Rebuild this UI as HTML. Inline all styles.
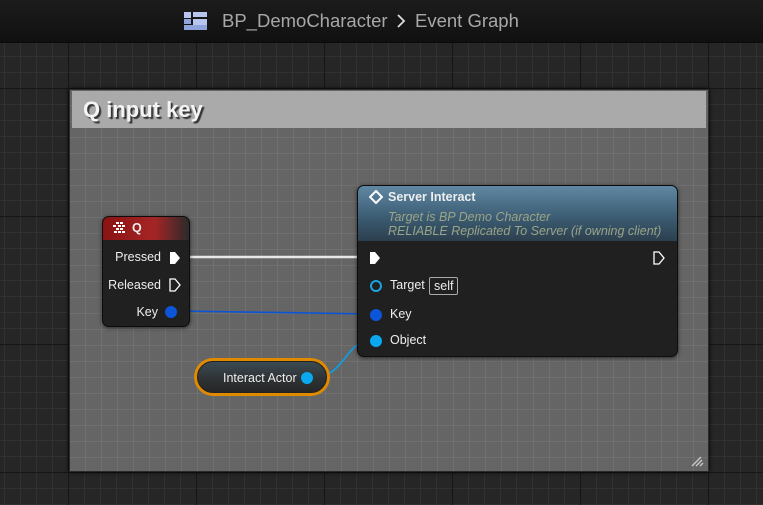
<!DOCTYPE html>
<html><head><style>
*{margin:0;padding:0;box-sizing:border-box}
body{width:763px;height:505px;overflow:hidden;position:relative;font-family:"Liberation Sans",sans-serif;
background-color:#262626;
background-image:
linear-gradient(to right,#161616 0 1px,transparent 1px),
linear-gradient(to bottom,#161616 0 1px,transparent 1px),
linear-gradient(to right,#313131 0 1px,transparent 1px),
linear-gradient(to bottom,#313131 0 1px,transparent 1px);
background-size:128px 128px,128px 128px,16px 16px,16px 16px;
background-position:68px 0,0 88px,4px 0,0 8px;}
.hdr{position:absolute;left:0;top:0;width:763px;height:43px;background:linear-gradient(#1c1c1c,#101010);border-bottom:1px solid #0a0a0a}
.hdr .t{position:absolute;top:10px;font-size:18.5px;color:#a8a8a8}
.cm{position:absolute;left:69px;top:89px;width:640px;height:383px;background-color:#656565;
background-image:linear-gradient(to right,#707070 0 1px,transparent 1px),linear-gradient(to bottom,#707070 0 1px,transparent 1px);
background-size:16px 16px;background-position:-1px 0,0 -1px;border:1px solid #2a2a2a;box-shadow:0 0 4px #000}
.cm .tb{position:absolute;left:2px;top:1px;right:2px;height:37px;background:#aaa}
.cm .tb span{position:absolute;left:11px;top:6px;font-size:22px;font-weight:bold;color:#f4f4f4;text-shadow:2px 2px 1px #333}
.node{position:absolute;background:#1f201f;border:1px solid #0c0c0c;border-radius:7px;box-shadow:0 1px 4px rgba(0,0,0,.6);overflow:hidden}
.lbl{position:absolute;font-size:12.5px;color:#eee;white-space:nowrap}
.pin{position:absolute;width:12px;height:12px;border-radius:50%}
</style></head><body>
<div class="hdr">
<svg style="position:absolute;left:184px;top:12px" width="24" height="18"><rect x="0" y="0" width="7" height="6" fill="#b8c6ef"/><rect x="0" y="7" width="7" height="5" fill="#8fa3dc"/><rect x="9" y="0" width="14" height="5" fill="#b8c6ef"/><rect x="9" y="7" width="14" height="6" fill="#b8c6ef"/><rect x="0" y="13" width="23" height="5" fill="#8fa3dc"/></svg>
<span class="t" style="left:222px">BP_DemoCharacter</span>
<svg style="position:absolute;left:395px;top:13px" width="12" height="16"><path d="M3 2l6 6-6 6" stroke="#ddd" stroke-width="1.8" fill="none"/></svg>
<span class="t" style="left:415px">Event Graph</span>
</div>
<div class="cm"><div class="tb"><span>Q input key</span></div>
<svg style="position:absolute;right:4px;bottom:4px" width="14" height="12"><path d="M2 11L11 2M6 11L12 5M10 11L13 8" stroke="#ccc" stroke-width="1.3"/></svg>
</div>
<svg style="position:absolute;left:0;top:0" width="763" height="505">
<path d="M185 257H368" stroke="#e8e8e8" stroke-width="2.5"/>
<path d="M180 311C260 312 300 313 370 314" stroke="#0a55d5" stroke-width="1.6" fill="none"/>
<path d="M314 377C345 377 345 341 370 341" stroke="#0aa0e8" stroke-width="1.6" fill="none"/>
</svg>
<div class="node" style="left:102px;top:216px;width:88px;height:111px">
<div style="height:23px;background:linear-gradient(to right,#8a1212 0,#a52525 60%,#2a2a2a 100%)"></div>
<svg style="position:absolute;left:10px;top:5px" width="14" height="13"><g fill="#fff"><rect x="3" y="0" width="3" height="2"/><rect x="7" y="0" width="3" height="2"/><rect x="0" y="3" width="3" height="2"/><rect x="5" y="3" width="3" height="2"/><rect x="9" y="3" width="3" height="2"/><rect x="3" y="6" width="3" height="2"/><rect x="7" y="6" width="3" height="2"/><rect x="1" y="9" width="3" height="2"/><rect x="5" y="9" width="3" height="2"/><rect x="9" y="9" width="3" height="2"/></g></svg>
<span class="lbl" style="left:29px;top:4px;font-weight:bold">Q</span>
<span class="lbl" style="right:28px;top:33px">Pressed</span>
<svg style="position:absolute;left:66px;top:34px" width="12" height="14"><path d="M1 1H6L11 7L6 13H1Z" fill="#fff"/></svg>
<span class="lbl" style="right:28px;top:61px">Released</span>
<svg style="position:absolute;left:66px;top:61px" width="12" height="14"><path d="M1 1H6L11 7L6 13H1Z" fill="none" stroke="#fff" stroke-width="1.3"/></svg>
<span class="lbl" style="right:31px;top:88px">Key</span>
<div class="pin" style="left:62px;top:89px;background:#0b56d8"></div>
</div>
<div class="node" style="left:357px;top:185px;width:321px;height:172px">
<div style="height:55px;background:linear-gradient(to bottom,#6088a4,#3a5a70 60%,#2c3f4e);"></div>
<svg style="position:absolute;left:11px;top:4px" width="14" height="14"><path d="M7 1L13 7L7 13L1 7Z" fill="none" stroke="#fff" stroke-width="2"/></svg>
<span class="lbl" style="left:30px;top:4px;font-weight:bold">Server Interact</span>
<span class="lbl" style="left:30px;top:24px;font-style:italic;color:#9ba487">Target is BP Demo Character</span>
<span class="lbl" style="left:30px;top:38px;font-style:italic;color:#9ba487">RELIABLE Replicated To Server (if owning client)</span>
<svg style="position:absolute;left:11px;top:65px" width="12" height="14"><path d="M1 1H6L11 7L6 13H1Z" fill="#fff"/></svg>
<svg style="position:absolute;left:295px;top:65px" width="12" height="14"><path d="M1 1H6L11 7L6 13H1Z" fill="none" stroke="#fff" stroke-width="1.3"/></svg>
<div class="pin" style="left:12px;top:94px;border:2px solid #1aa3e0"></div>
<span class="lbl" style="left:32px;top:92px">Target</span>
<span class="lbl" style="left:71px;top:91px;border:1px solid #aaa;border-radius:2px;padding:0 4px;height:18px;line-height:16px">self</span>
<div class="pin" style="left:12px;top:123px;background:#0b56d8"></div>
<span class="lbl" style="left:32px;top:121px">Key</span>
<div class="pin" style="left:12px;top:149px;background:#0aa8ef"></div>
<span class="lbl" style="left:32px;top:147px">Object</span>
</div>
<div style="position:absolute;left:194px;top:358px;width:136px;height:38px;border-radius:19px;background:#e08a00;padding:3px">
<div style="width:100%;height:100%;border-radius:16px;background:linear-gradient(#3a4a52,#2e3133 60%,#262626);border:1px solid #222;position:relative">
<span class="lbl" style="left:25px;top:9px">Interact Actor</span>
<div class="pin" style="left:103px;top:10px;background:#0aa8ef"></div>
</div></div>
</body></html>
